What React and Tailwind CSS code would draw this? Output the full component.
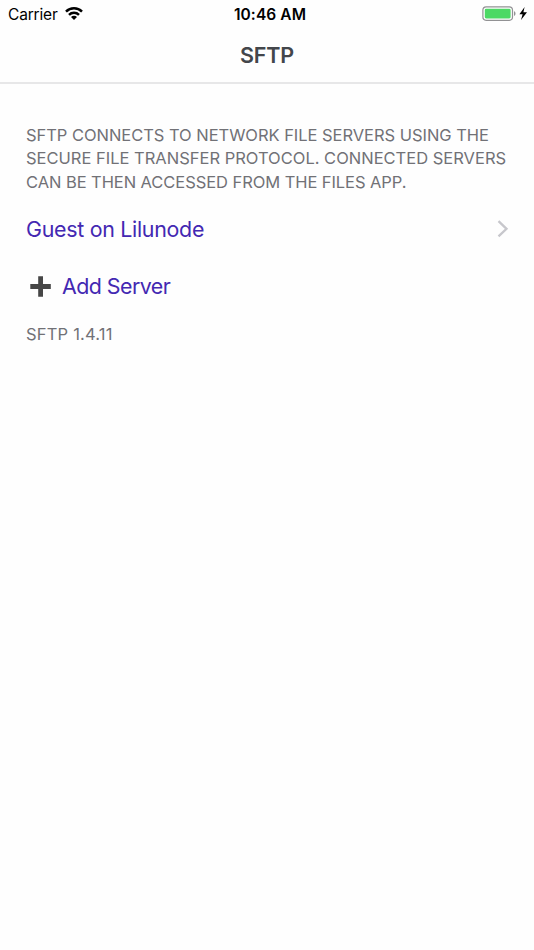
function StatusBar() {
  return (
    <div className="grid h-7 grid-cols-3 items-center text-black">
      <div className="flex items-center gap-[7px] pl-2">
        <span className="text-[15.5px] leading-7 tracking-[-0.18px]">Carrier</span>
        <svg className="mb-0.5" width="18" height="13" viewBox="0 0 18 13" fill="none" stroke="black" strokeWidth="2.5">
          <path d="M1 4.6a11.4 11.4 0 0 1 16 0" />
          <path d="M4 7.9a7.1 7.1 0 0 1 10 0" />
          <path d="M9 13 6 10a4.2 4.2 0 0 1 6 0Z" fill="black" stroke="none" />
        </svg>
      </div>
      <div className="pt-px pl-1.5 text-center text-[15.5px] leading-7 font-semibold tracking-[0.1px] whitespace-nowrap">10:46 AM</div>
      <div className="flex items-center justify-end pr-1.5 pb-px">
        <svg width="46" height="16" viewBox="0 0 46 16">
          <rect x="0.9" y="0.9" width="29.6" height="13.4" rx="3.2" fill="none" stroke="#929294" strokeWidth="1.2" />
          <rect x="2.8" y="2.7" width="25.8" height="9.8" rx="1.4" fill="#4cd964" />
          <path d="M32 5.3c2 .6 2 4 0 4.6Z" fill="#929294" />
          <path d="M42.6 1.1 37.4 8.3h3.2l-1.6 5.6 6-7.6h-3.6Z" fill="black" />
        </svg>
      </div>
    </div>
  );
}

export default function App() {
  return (
    <div className="h-[950px] w-full bg-[#fefefe] font-['Inter',sans-serif]">
      <header className="h-[84px] border-b-2 border-[#e7e7e8]">
        <StatusBar />
        <h1 className="text-center text-[21.5px] leading-[54px] font-semibold tracking-[-0.15px] text-[#43464b]">SFTP</h1>
      </header>
      <main className="px-[26px] pt-10 text-[#717176]">
        <p className="text-[16.5px] leading-[23.3px] whitespace-nowrap">
          <span className="tracking-[-0.04px]">SFTP CONNECTS TO NETWORK FILE SERVERS USING THE</span><br />
          SECURE FILE TRANSFER PROTOCOL. CONNECTED SERVERS<br />
          <span className="tracking-[-0.07px]">CAN BE THEN ACCESSED FROM THE FILES APP.</span>
        </p>
        <div className="mt-[7px] flex h-[57px] items-center justify-between text-[21.4px] tracking-[-0.29px] text-[#4328b2]">
          <span>Guest on Lilunode</span>
          <svg className="mr-[-1px] mb-px" width="12" height="18" viewBox="0 0 12 18" fill="none" stroke="#c7c7cc" strokeWidth="2.3">
            <path d="m1.5 1.2 8 7.6-8 7.6" />
          </svg>
        </div>
        <div className="flex h-[57px] items-center gap-[11px] pl-1 text-[21.4px] tracking-[-0.54px] text-[#4328b2]">
          <svg width="21" height="21" viewBox="0 0 21 21" fill="#464646">
            <path d="M8.2 .3h4.8V8h7.8v5H13v7.7H8.2V13H.3V8h7.9Z" />
          </svg>
          <span>Add Server</span>
        </div>
        <p className="mt-2 text-[16.5px] leading-[23.3px] tracking-[0.2px]">SFTP 1.4.11</p>
      </main>
    </div>
  );
}
